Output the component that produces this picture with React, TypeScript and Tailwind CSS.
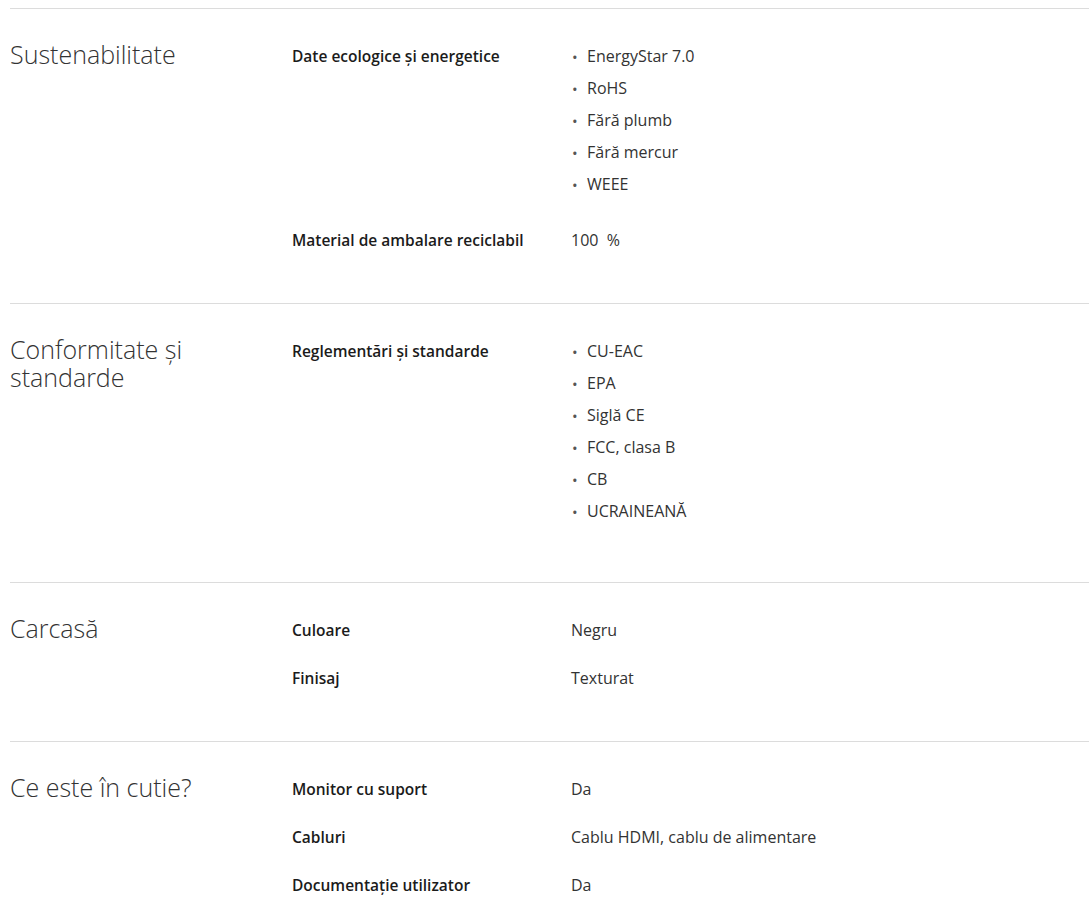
import React from 'react'

type Row = { label: string; values: string[]; list?: boolean }
type Section = { title: string; rows: Row[] }

const sections: Section[] = [
  {
    title: 'Sustenabilitate',
    rows: [
      { label: 'Date ecologice și energetice', values: ['EnergyStar 7.0', 'RoHS', 'Fără plumb', 'Fără mercur', 'WEEE'], list: true },
      { label: 'Material de ambalare reciclabil', values: ['100  %'] },
    ],
  },
  {
    title: 'Conformitate și standarde',
    rows: [
      { label: 'Reglementări și standarde', values: ['CU-EAC', 'EPA', 'Siglă CE', 'FCC, clasa B', 'CB', 'UCRAINEANĂ'], list: true },
    ],
  },
  {
    title: 'Carcasă',
    rows: [
      { label: 'Culoare', values: ['Negru'] },
      { label: 'Finisaj', values: ['Texturat'] },
    ],
  },
  {
    title: 'Ce este în cutie?',
    rows: [
      { label: 'Monitor cu suport', values: ['Da'] },
      { label: 'Cabluri', values: ['Cablu HDMI, cablu de alimentare'] },
      { label: 'Documentație utilizator', values: ['Da'] },
    ],
  },
]

export default function App() {
  return (
    <div className="min-h-[904px] bg-white pt-2 pl-[10px] text-[#333] font-['Open_Sans',sans-serif]">
      {sections.map((section) => (
        <div key={section.title} className="flex border-t border-[#dcdcdc] pt-[31px] pb-[31px]">
          <h2 className="w-[282px] shrink-0 pr-8 text-[25px] leading-[28px] font-light text-[#333]">
            {section.title}
          </h2>
          <div className="flex-1">
            {section.rows.map((row) => (
              <div key={row.label} className={row.list ? 'flex mb-6' : 'flex mb-4'}>
                <div className="w-[279px] shrink-0 text-[15.5px] leading-[32px] font-semibold text-[#1b1b1b]">
                  {row.label}
                </div>
                {row.list ? (
                  <ul>
                    {row.values.map((v) => (
                      <li key={v} className="flex items-center text-[16px] leading-[32px]">
                        <span className="w-4 text-[15px] text-[#555] pl-[1px] translate-y-[1px]">•</span>
                        <span className="whitespace-pre">{v}</span>
                      </li>
                    ))}
                  </ul>
                ) : (
                  <div className="text-[16px] leading-[32px] whitespace-pre">{row.values[0]}</div>
                )}
              </div>
            ))}
          </div>
        </div>
      ))}
    </div>
  )
}
